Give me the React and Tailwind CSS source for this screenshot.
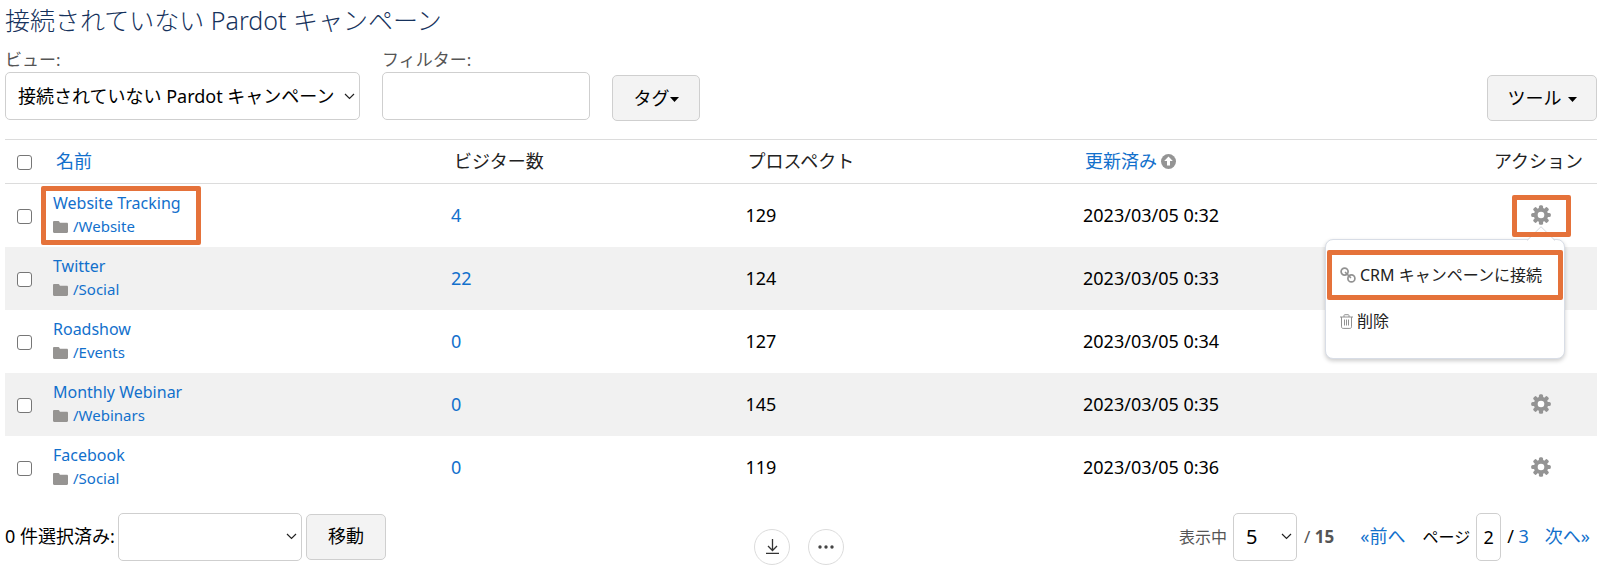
import React from "react";

const rows = [
  { name: "Website Tracking", folder: "/Website", visitors: "4", prospects: "129", updated: "2023/03/05 0:32", marked: true, menu: true },
  { name: "Twitter", folder: "/Social", visitors: "22", prospects: "124", updated: "2023/03/05 0:33" },
  { name: "Roadshow", folder: "/Events", visitors: "0", prospects: "127", updated: "2023/03/05 0:34" },
  { name: "Monthly Webinar", folder: "/Webinars", visitors: "0", prospects: "145", updated: "2023/03/05 0:35" },
  { name: "Facebook", folder: "/Social", visitors: "0", prospects: "119", updated: "2023/03/05 0:36" },
];

const CONTROL = "rounded-[5px] border border-[#cfcfcf] bg-white";
const BUTTON = "h-[46px] cursor-pointer rounded-[5px] border border-[#cfcfcf] bg-[#f3f3f3] text-[18px] text-black";
const LINK = "text-[#1270cc]";

function Gear() {
  return (
    <svg className="size-5" viewBox="0 0 20 20" aria-hidden="true">
      {[0, 45, 90, 135].map((a) => (
        <rect key={a} x="7.9" y="0.2" width="4.2" height="19.6" rx="1.5" fill="#949494" transform={`rotate(${a} 10 10)`} />
      ))}
      <circle cx="10" cy="10" r="7.2" fill="#949494" />
      <circle cx="10" cy="10" r="3.3" fill="#fff" />
    </svg>
  );
}

function Folder() {
  return (
    <svg className="h-3 w-[15px]" viewBox="0 0 15 12" aria-hidden="true">
      <path d="M1.2 0h4.2c.5 0 .8.3 1 .7l.5 1h6.9c.7 0 1.2.5 1.2 1.2v7.9c0 .7-.5 1.2-1.2 1.2H1.2C.5 12 0 11.500 0 10.800V1.200C0 .5.5 0 1.200 0z" fill="#969492" />
    </svg>
  );
}

function Caret() {
  return (
    <svg className="mt-[2px] h-[5px] w-[9px]" viewBox="0 0 9 5" aria-hidden="true">
      <path d="M0 0h9L4.500 5z" fill="#000" />
    </svg>
  );
}

function Chevron() {
  return (
    <svg className="pointer-events-none absolute inset-y-0 right-[5px] my-auto h-[7px] w-[11px]" viewBox="0 0 11 7" aria-hidden="true">
      <path d="M1 1l4.500 4.500L10 1" fill="none" stroke="#222" strokeWidth="1.200" />
    </svg>
  );
}

function Check({ label }) {
  return (
    <input
      type="checkbox"
      aria-label={label}
      className="mt-[2px] ml-3 block size-[15px] appearance-none rounded-[3px] border border-[#767676] bg-white checked:bg-[#1270cc]"
    />
  );
}

function Menu() {
  return (
    <div className="absolute right-8 top-[55px] z-10 w-60 rounded-lg border border-[#d8dde6] bg-white pt-[10px] pb-4 text-left shadow-[0_2px_4px_rgba(0,0,0,0.2)]">
      <svg className="absolute -top-[14px] right-2 h-[15px] w-[30px]" viewBox="0 0 30 15" aria-hidden="true">
        <path d="M1 15L15 .7 29 15z" fill="#fff" />
        <path d="M1 14.500L15 .7 29 14.500" fill="none" stroke="#d3d6db" />
      </svg>
      <button type="button" className="mx-px flex h-[50px] w-[236px] cursor-pointer items-center gap-1 rounded-[2px] border-[5px] border-[#e5723a] pl-2 text-[16px] whitespace-nowrap text-[#222]">
        <svg className="size-4 shrink-0" viewBox="0 0 16 16" fill="none" stroke="#929292" strokeWidth="1.700" aria-hidden="true">
          <circle cx="4.600" cy="4.600" r="3.500" />
          <circle cx="11.400" cy="11.400" r="3.500" />
          <path d="M5.500 5.500l5 5" strokeLinecap="round" />
        </svg>
        CRM キャンペーンに接続
      </button>
      <button type="button" className="flex h-[42px] cursor-pointer items-center gap-1 pl-[14px] text-[16px] text-[#222]">
        <svg className="h-[15px] w-[13px]" viewBox="0 0 13 15" fill="none" stroke="#929292" aria-hidden="true">
          <path d="M0 3h13M4 3V1.500c0-.5.3-.8.8-.8h3.400c.5 0 .8.3.8.8V3M1.500 3v9.800c0 1 .6 1.600 1.600 1.600h6.800c1 0 1.600-.6 1.600-1.600V3M4.500 5.500v6M6.500 5.500v6M8.500 5.500v6" />
        </svg>
        削除
      </button>
    </div>
  );
}

export default function App() {
  return (
    <main className="bg-white pr-[3px] pb-[10px] pl-[5px] font-['Noto_Sans','Noto_Sans_CJK_JP',sans-serif] text-[18px] text-black">
      <h1 className="pt-px text-[25px] leading-[38px] font-light text-[#16325c]">接続されていない Pardot キャンペーン</h1>

      <div className="mt-[9px] flex items-start">
        <div className="mr-[22px] w-[355px]">
          <label htmlFor="view" className="block h-6 text-[17px] leading-6 text-[#555]">ビュー:</label>
          <div className="relative">
            <select id="view" className={`h-12 w-full appearance-none pl-3 ${CONTROL}`}>
              <option>接続されていない Pardot キャンペーン</option>
            </select>
            <Chevron />
          </div>
        </div>
        <div className="mr-[22px] w-52">
          <label htmlFor="filter" className="block h-6 text-[17px] leading-6 text-[#555]">フィルター:</label>
          <input id="filter" type="text" className={`h-12 w-full px-3 ${CONTROL}`} />
        </div>
        <button type="button" className={`mt-[27px] flex w-22 items-center justify-center ${BUTTON}`}>
          タグ<Caret />
        </button>
        <button type="button" className={`mt-[27px] ml-auto flex w-[110px] items-center justify-center gap-[6px] ${BUTTON}`}>
          ツール<Caret />
        </button>
      </div>

      <table className="mt-[18px] w-full table-fixed border-collapse text-left">
        <colgroup>
          <col className="w-12" />
          <col className="w-[25%]" />
          <col className="w-[18.5%]" />
          <col className="w-[21.2%]" />
          <col />
          <col className="w-[111px]" />
        </colgroup>
        <thead>
          <tr className="h-11 border-y border-[#dcdcdc] text-[#222] [&>th]:font-normal">
            <th scope="col"><Check label="すべて選択" /></th>
            <th scope="col" className="pl-[3px]"><a href="#name" className={LINK}>名前</a></th>
            <th scope="col" className="pl-[3px]">ビジター数</th>
            <th scope="col" className="pl-[2px]">プロスペクト</th>
            <th scope="col" className="pl-[2px]">
              <a href="#updated" className={`flex items-center gap-1 ${LINK}`}>
                更新済み
                <svg className="size-[15px]" viewBox="0 0 15 15" aria-hidden="true">
                  <circle cx="7.500" cy="7.500" r="7.500" fill="#949494" />
                  <path d="M7.500 2.600L11.800 7H9v4.600H6V7H3.200z" fill="#fff" />
                </svg>
              </a>
            </th>
            <th scope="col" className="pr-[14px] text-right whitespace-nowrap">アクション</th>
          </tr>
        </thead>
        <tbody>
          {rows.map((r) => (
            <tr key={r.name} className="h-[63px] even:bg-[#f1f1f1]">
              <td><Check label={r.name} /></td>
              <td className="text-[16px] leading-[23px]">
                <div className="relative w-fit">
                  {r.marked && <span className="pointer-events-none absolute -top-[6px] -right-[20px] -bottom-[7px] -left-3 rounded-[2px] border-[5px] border-[#e5723a]" />}
                  <a href="#campaign" className={`block ${LINK}`}>{r.name}</a>
                  <a href="#folder" className={`flex items-center gap-[5px] text-[15px] ${LINK}`}><Folder />{r.folder}</a>
                </div>
              </td>
              <td><a href="#visitors" className={LINK}>{r.visitors}</a></td>
              <td>{r.prospects}</td>
              <td>{r.updated}</td>
              <td className="relative">
                {r.menu && <span className="pointer-events-none absolute top-[11px] right-[26px] z-20 h-[42px] w-[59px] rounded-[2px] border-[5px] border-[#e5723a]" />}
                <button type="button" aria-label="アクション" className="ml-[45px] block cursor-pointer"><Gear /></button>
                {r.menu && <Menu />}
              </td>
            </tr>
          ))}
        </tbody>
      </table>

      <footer className="relative mt-[14px] flex items-center">
        <label htmlFor="bulk" className="w-[113px] whitespace-nowrap">0 件選択済み:</label>
        <div className="relative mr-1 w-[184px]">
          <select id="bulk" className={`block h-12 w-full appearance-none ${CONTROL}`}><option></option></select>
          <Chevron />
        </div>
        <button type="button" className={`w-20 ${BUTTON}`}>移動</button>

        <div className="ml-auto flex items-center">
          <label htmlFor="size" className="mr-[6px] text-[16px] text-[#555]">表示中</label>
          <div className="relative w-16">
            <select id="size" className={`block h-12 w-full appearance-none pl-3 text-[20px] ${CONTROL}`}><option>5</option></select>
            <Chevron />
          </div>
          <span className="ml-[7px] text-[17px] text-[#555]">/ <b>15</b></span>
          <a href="#prev" className={`ml-[26px] ${LINK}`}>«前へ</a>
          <label htmlFor="page" className="ml-[17px] mr-[6px] text-[16px]">ページ</label>
          <input id="page" type="text" defaultValue="2" className={`h-12 w-[25px] text-center text-[18px] ${CONTROL}`} />
          <span className="ml-[6px]">/ <a href="#last" className={LINK}>3</a></span>
          <a href="#next" className={`ml-4 mr-[7px] ${LINK}`}>次へ»</a>
        </div>

        <div className="absolute top-4 left-[749px] flex gap-[18px]">
          <button type="button" aria-label="ダウンロード" className="flex size-9 items-center justify-center rounded-full border border-[#dcdcdc] bg-white">
            <svg className="size-[15px]" viewBox="0 0 15 15" fill="none" stroke="#333" strokeWidth="1.300" aria-hidden="true">
              <path d="M7.500 0v11M3 7l4.500 4.500L12 7M1 14.300h13" />
            </svg>
          </button>
          <button type="button" aria-label="その他" className="flex size-9 items-center justify-center rounded-full border border-[#dcdcdc] bg-white">
            <svg className="h-1 w-4" viewBox="0 0 16 4" fill="#444" aria-hidden="true">
              <circle cx="2" cy="2" r="1.700" /><circle cx="8" cy="2" r="1.700" /><circle cx="14" cy="2" r="1.700" />
            </svg>
          </button>
        </div>
      </footer>
    </main>
  );
}
